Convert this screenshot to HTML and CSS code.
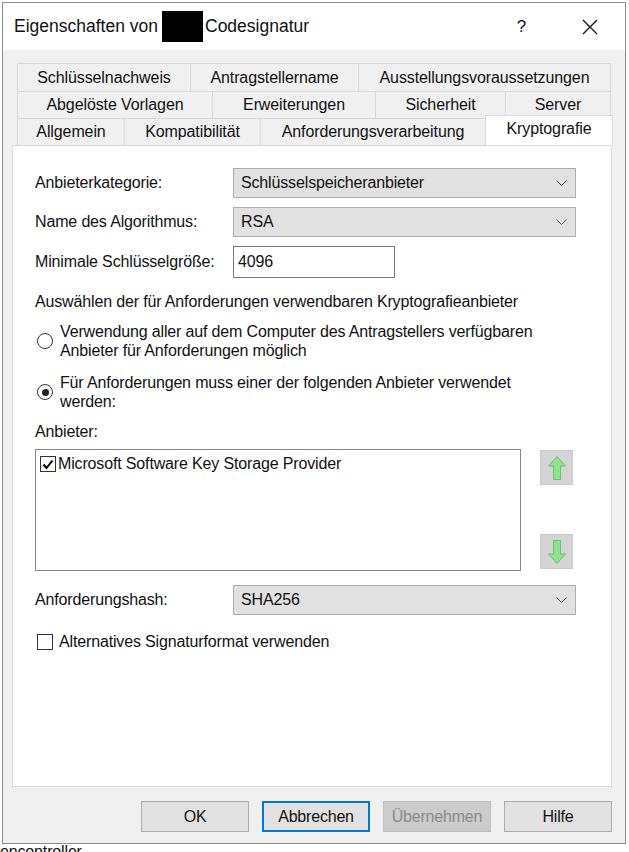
FILE: index.html
```html
<!DOCTYPE html>
<html lang="de">
<head>
    <meta charset="UTF-8">
    <title>Eigenschaften von Codesignatur</title>
    <link rel="stylesheet" href="styles.css">
</head>
<body>
    <div class="window">
        <div class="titlebar">
            <span class="title">Eigenschaften von <span class="redact"></span>Codesignatur</span>
            <span class="help">?</span>
            <svg class="close" width="16" height="16" viewBox="0 0 16 16">
                <path d="M1 1 L15 15 M15 1 L1 15" stroke="#111" stroke-width="1.3" fill="none"/>
            </svg>
        </div>

        <div class="client">
            <!-- Reiter -->
            <div class="tabs">
                <div class="tab-row row-1">
                    <div class="tab">Schlüsselnachweis</div>
                    <div class="tab">Antragstellername</div>
                    <div class="tab">Ausstellungsvoraussetzungen</div>
                </div>
                <div class="tab-row row-2">
                    <div class="tab">Abgelöste Vorlagen</div>
                    <div class="tab">Erweiterungen</div>
                    <div class="tab">Sicherheit</div>
                    <div class="tab">Server</div>
                </div>
                <div class="tab-row row-3">
                    <div class="tab">Allgemein</div>
                    <div class="tab">Kompatibilität</div>
                    <div class="tab">Anforderungsverarbeitung</div>
                    <div class="tab active">Kryptografie</div>
                </div>
            </div>

            <div class="panel">
                <div class="form-grid">
                    <label>Anbieterkategorie:</label>
                    <div class="select">Schlüsselspeicheranbieter<svg class="chev" width="11" height="6" viewBox="0 0 11 6"><path d="M0.5 0.5 L5.5 5.5 L10.5 0.5" stroke="#555" fill="none"/></svg></div>

                    <label>Name des Algorithmus:</label>
                    <div class="select">RSA<svg class="chev" width="11" height="6" viewBox="0 0 11 6"><path d="M0.5 0.5 L5.5 5.5 L10.5 0.5" stroke="#555" fill="none"/></svg></div>

                    <label>Minimale Schlüsselgröße:</label>
                    <div class="textbox">4096</div>
                </div>

                <p class="section">Auswählen der für Anforderungen verwendbaren Kryptografieanbieter</p>

                <div class="radio-item">
                    <span class="radio"></span>
                    <span>Verwendung aller auf dem Computer des Antragstellers verfügbaren<br>Anbieter für Anforderungen möglich</span>
                </div>
                <div class="radio-item">
                    <span class="radio checked"></span>
                    <span>Für Anforderungen muss einer der folgenden Anbieter verwendet<br>werden:</span>
                </div>

                <p class="section anbieter">Anbieter:</p>

                <div class="list-row">
                    <div class="listbox">
                        <div class="list-item">
                            <span class="check small checked">
                                <svg width="12" height="11" viewBox="0 0 12 11"><path d="M1.5 5.5 L4.5 9 L10.5 1.5" stroke="#000" stroke-width="2" fill="none"/></svg>
                            </span>
                            Microsoft Software Key Storage Provider
                        </div>
                    </div>
                    <div class="move-btns">
                        <div class="move">
                            <svg width="20" height="26" viewBox="0 0 20 26"><path d="M10 1.5 L18.5 11 L13.5 11 L13.5 24.5 L6.5 24.5 L6.5 11 L1.5 11 Z" fill="#8fe38f" stroke="#68c468"/></svg>
                        </div>
                        <div class="move">
                            <svg width="20" height="26" viewBox="0 0 20 26"><path d="M10 24.5 L18.5 15 L13.5 15 L13.5 1.5 L6.5 1.5 L6.5 15 L1.5 15 Z" fill="#8fe38f" stroke="#68c468"/></svg>
                        </div>
                    </div>
                </div>

                <div class="form-grid hash">
                    <label>Anforderungshash:</label>
                    <div class="select">SHA256<svg class="chev" width="11" height="6" viewBox="0 0 11 6"><path d="M0.5 0.5 L5.5 5.5 L10.5 0.5" stroke="#555" fill="none"/></svg></div>
                </div>

                <div class="check-item">
                    <span class="check"></span>
                    Alternatives Signaturformat verwenden
                </div>
            </div>

            <div class="buttons">
                <button class="btn">OK</button>
                <button class="btn focus">Abbrechen</button>
                <button class="btn disabled">Übernehmen</button>
                <button class="btn">Hilfe</button>
            </div>
        </div>
    </div>
    <div class="behind">encontroller</div>
</body>
</html>
```

FILE: styles.css
```css
body {
    margin: 0;
    background: #fff;
    font-family: "Liberation Sans", Arial, sans-serif;
    font-size: 16px;
    letter-spacing: -0.15px;
    color: #111;
    overflow: hidden;
}
.window {
    margin: 2px 0 0 2px;
    width: 622px;
    border: 1px solid #8c8c8c;
    background: #f0f0f0;
}
.titlebar {
    height: 47px;
    background: #fff;
    display: flex;
    align-items: center;
    padding-left: 11px;
}
.title {
    font-size: 17.5px;
    letter-spacing: 0;
    display: flex;
    align-items: center;
    flex: 1;
}
.redact {
    display: inline-block;
    width: 41px;
    height: 31px;
    background: #000;
    margin: 0 2px 0 4px;
}
.help {
    font-size: 17px;
    margin-right: 56px;
}
.close {
    margin-right: 27px;
}
.client {
    padding: 13px 0 11px 0;
}
/* Reiter */
.tabs {
    margin-left: 14px;
    width: 593px;
}
.tab-row {
    display: grid;
    height: 27px;
}
.row-1 {
    height: 28px;
    grid-template-columns: 173px 168px 1fr;
}
.row-2 {
    grid-template-columns: 195px 163px 130px 1fr;
}
.row-3 {
    grid-template-columns: 107px 136px 225px 1fr;
}
.tab {
    border: 1px solid #d9d9d9;
    border-bottom: none;
    margin-right: -1px;
    background: #f0f0f0;
    display: flex;
    align-items: center;
    justify-content: center;
    white-space: nowrap;
    letter-spacing: -0.1px;
}
.tab.active {
    background: #fff;
    margin-top: -3px;
    margin-right: -3px;
    position: relative;
    z-index: 1;
    padding-bottom: 4px;
}
.panel {
    margin-left: 9px;
    width: 576px;
    height: 640px;
    border: 1px solid #d9d9d9;
    background: #fff;
    padding: 0 0 0 22px;
}
.form-grid {
    display: grid;
    grid-template-columns: 198px 343px;
    row-gap: 9px;
    align-items: center;
    margin-top: 22px;
}
.select {
    height: 30px;
    box-sizing: border-box;
    background: #e1e1e1;
    border: 1px solid #adadad;
    display: flex;
    align-items: center;
    justify-content: space-between;
    padding: 0 8px 0 7px;
}
.textbox {
    width: 162px;
    height: 32px;
    box-sizing: border-box;
    border: 1px solid #7a7a7a;
    background: #fff;
    display: flex;
    align-items: center;
    padding-left: 4px;
}
.section {
    margin: 15px 0 0 0;
    line-height: 18px;
}
.radio-item {
    display: flex;
    align-items: center;
    line-height: 19px;
    margin-top: 11px;
}
.radio-item + .radio-item {
    margin-top: 13px;
}
.radio {
    width: 16px;
    height: 16px;
    border: 1px solid #333;
    border-radius: 50%;
    box-sizing: border-box;
    margin: 0 7px 0 2px;
    position: relative;
    flex: none;
}
.radio.checked::after {
    content: "";
    position: absolute;
    left: 3.5px;
    top: 3.5px;
    width: 7px;
    height: 7px;
    border-radius: 50%;
    background: #222;
}
.anbieter {
    margin-top: 12px;
}
.list-row {
    display: flex;
    margin-top: 8px;
}
.listbox {
    width: 486px;
    height: 122px;
    box-sizing: border-box;
    border: 1px solid #828790;
    padding: 5px 4px;
}
.list-item {
    display: flex;
    align-items: center;
    gap: 2px;
}
.move-btns {
    margin-left: 19px;
    display: flex;
    flex-direction: column;
    justify-content: space-between;
    padding: 1px 0 2px;
}
.move {
    width: 33px;
    height: 35px;
    box-sizing: border-box;
    background: #d4d4d4;
    border: 1px solid #cbcbcb;
    display: flex;
    align-items: center;
    justify-content: center;
}
.hash {
    margin-top: 14px;
}
.check {
    width: 16px;
    height: 16px;
    box-sizing: border-box;
    border: 1px solid #333;
    background: #fff;
    display: inline-flex;
    align-items: center;
    justify-content: center;
    flex: none;
}
.check-item {
    display: flex;
    align-items: center;
    gap: 6px;
    margin: 18px 0 0 2px;
}
.buttons {
    display: flex;
    justify-content: flex-end;
    gap: 13px;
    margin: 14px 13px 0 0;
}
.btn {
    width: 108px;
    height: 31px;
    background: #e1e1e1;
    border: 1px solid #adadad;
    font-family: "Liberation Sans", Arial, sans-serif;
    font-size: 16px;
    letter-spacing: -0.2px;
    color: #111;
    padding: 0;
}
.btn.focus {
    border: 2px solid #0078d7;
}
.btn.disabled {
    background: #cccccc;
    border-color: #bfbfbf;
    color: #8a8a8a;
}
.behind {
    font-size: 16px;
    line-height: 14px;
    margin-top: 1px;
}
```
